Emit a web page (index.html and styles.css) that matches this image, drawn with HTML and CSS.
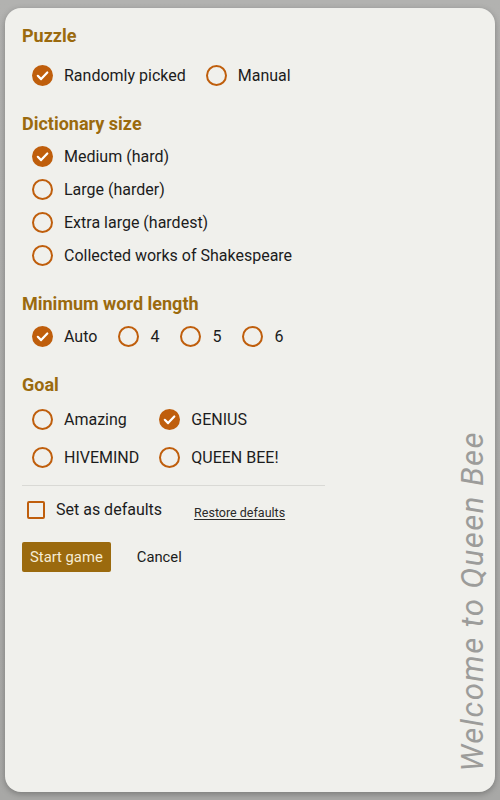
FILE: index.html
```html
<!DOCTYPE html>
<html lang="en">
<head>
<meta charset="utf-8">
<title>Queen Bee</title>
<link rel="stylesheet" href="styles.css">
</head>
<body>
<div class="card">
  <main class="content">
    <section class="group">
      <h2 class="group-title">Puzzle</h2>
      <div class="options options-inline options-first">
        <label class="option"><svg class="radio" viewBox="0 0 21 21"><circle cx="10.5" cy="10.5" r="10.5" class="fill"/><path d="M5.8 10.8l3.3 3.3 6.2-6.6" class="tick"/></svg><span class="label">Randomly picked</span></label>
        <label class="option"><svg class="radio" viewBox="0 0 21 21"><circle cx="10.5" cy="10.5" r="9.5" class="ring"/></svg><span class="label">Manual</span></label>
      </div>
    </section>

    <section class="group">
      <h2 class="group-title">Dictionary size</h2>
      <div class="options options-stack">
        <label class="option"><svg class="radio" viewBox="0 0 21 21"><circle cx="10.5" cy="10.5" r="10.5" class="fill"/><path d="M5.8 10.8l3.3 3.3 6.2-6.6" class="tick"/></svg><span class="label">Medium (hard)</span></label>
        <label class="option"><svg class="radio" viewBox="0 0 21 21"><circle cx="10.5" cy="10.5" r="9.5" class="ring"/></svg><span class="label">Large (harder)</span></label>
        <label class="option"><svg class="radio" viewBox="0 0 21 21"><circle cx="10.5" cy="10.5" r="9.5" class="ring"/></svg><span class="label">Extra large (hardest)</span></label>
        <label class="option"><svg class="radio" viewBox="0 0 21 21"><circle cx="10.5" cy="10.5" r="9.5" class="ring"/></svg><span class="label">Collected works of Shakespeare</span></label>
      </div>
    </section>

    <section class="group">
      <h2 class="group-title">Minimum word length</h2>
      <div class="options options-inline options-lengths">
        <label class="option"><svg class="radio" viewBox="0 0 21 21"><circle cx="10.5" cy="10.5" r="10.5" class="fill"/><path d="M5.8 10.8l3.3 3.3 6.2-6.6" class="tick"/></svg><span class="label">Auto</span></label>
        <label class="option"><svg class="radio" viewBox="0 0 21 21"><circle cx="10.5" cy="10.5" r="9.5" class="ring"/></svg><span class="label">4</span></label>
        <label class="option"><svg class="radio" viewBox="0 0 21 21"><circle cx="10.5" cy="10.5" r="9.5" class="ring"/></svg><span class="label">5</span></label>
        <label class="option"><svg class="radio" viewBox="0 0 21 21"><circle cx="10.5" cy="10.5" r="9.5" class="ring"/></svg><span class="label">6</span></label>
      </div>
    </section>

    <section class="group">
      <h2 class="group-title">Goal</h2>
      <div class="options options-grid">
        <label class="option"><svg class="radio" viewBox="0 0 21 21"><circle cx="10.5" cy="10.5" r="9.5" class="ring"/></svg><span class="label">Amazing</span></label>
        <label class="option"><svg class="radio" viewBox="0 0 21 21"><circle cx="10.5" cy="10.5" r="10.5" class="fill"/><path d="M5.8 10.8l3.3 3.3 6.2-6.6" class="tick"/></svg><span class="label">GENIUS</span></label>
        <label class="option"><svg class="radio" viewBox="0 0 21 21"><circle cx="10.5" cy="10.5" r="9.5" class="ring"/></svg><span class="label">HIVEMIND</span></label>
        <label class="option"><svg class="radio" viewBox="0 0 21 21"><circle cx="10.5" cy="10.5" r="9.5" class="ring"/></svg><span class="label">QUEEN BEE!</span></label>
      </div>
    </section>

    <hr class="divider">

    <div class="defaults-row">
      <label class="check-option"><span class="checkbox"></span><span class="label">Set as defaults</span></label>
      <a class="restore" href="#">Restore defaults</a>
    </div>

    <div class="actions">
      <button class="btn-primary" type="button">Start game</button>
      <button class="btn-text" type="button">Cancel</button>
    </div>
  </main>
  <aside class="welcome">Welcome to Queen Bee</aside>
</div>
</body>
</html>
```

FILE: styles.css
```css
* { box-sizing: border-box; }

html, body {
  margin: 0;
  height: 100%;
}

body {
  background: linear-gradient(#b2b2b0, #a8a8a6);
  padding: 8px 5px;
  font-family: Roboto, "Noto Sans", Arial, sans-serif;
  color: #1c1c1c;
}

.card {
  height: 784px;
  background: #f0f0ec;
  border-radius: 16px;
  box-shadow: 0 2px 6px rgba(0, 0, 0, 0.28);
  display: flex;
  padding: 18px 7px 0 17px;
}

.content {
  flex: 0 0 303px;
  display: flex;
  flex-direction: column;
}

.group + .group { margin-top: 22px; }

.group-title {
  margin: 0;
  font-size: 18px;
  line-height: 20px;
  font-weight: 700;
  color: #9b6a0e;
}

.options {
  padding-left: 10px;
  margin-top: 6px;
}

.options-first { margin-top: 13px; }

.options-inline {
  display: flex;
  column-gap: 20px;
}

.options-lengths { column-gap: 21px; }

.options-stack {
  display: flex;
  flex-direction: column;
}

.options-grid {
  display: grid;
  grid-template-columns: auto auto;
  justify-content: start;
  column-gap: 20px;
  row-gap: 5px;
  margin-top: 8px;
}

.option {
  display: flex;
  align-items: center;
  height: 33px;
  gap: 11px;
}

.radio {
  width: 21px;
  height: 21px;
  flex: none;
}

.radio .fill { fill: #bf5e0c; }
.radio .ring { fill: none; stroke: #bf5e0c; stroke-width: 2; }
.radio .tick { fill: none; stroke: #fff; stroke-width: 2.2; stroke-linecap: round; stroke-linejoin: round; }

.label {
  font-size: 16px;
  line-height: 20px;
  color: #1c1c1c;
}

.divider {
  border: 0;
  border-top: 1px solid #d9d9d5;
  margin: 11px 0 0;
  width: 100%;
}

.defaults-row {
  display: flex;
  align-items: center;
  height: 28px;
  margin-top: 10px;
  padding-left: 5px;
}

.check-option {
  display: flex;
  align-items: center;
  gap: 11px;
}

.checkbox {
  width: 18px;
  height: 18px;
  border: 2px solid #bf5e0c;
  border-radius: 2px;
}

.restore {
  margin-left: 32px;
  margin-top: 4px;
  font-size: 12.5px;
  color: #2a2a2a;
  text-decoration: underline;
  text-underline-offset: 2px;
}

.actions {
  display: flex;
  align-items: center;
  margin-top: 18px;
}

.btn-primary {
  height: 30px;
  padding: 0 8px;
  border: 0;
  border-radius: 2px;
  background: #9b6a0e;
  color: #f6ecd5;
  font-family: Roboto, Arial, sans-serif;
  font-size: 14.8px;
}

.btn-text {
  margin-left: 18px;
  padding: 0 8px;
  border: 0;
  background: none;
  color: #1c1c1c;
  font-family: Roboto, Arial, sans-serif;
  font-size: 14.8px;
}

.welcome {
  margin-left: auto;
  align-self: flex-end;
  margin-bottom: 20px;
  writing-mode: vertical-rl;
  transform: rotate(180deg);
  font-size: 31px;
  line-height: 31px;
  font-weight: 400;
  font-style: italic;
  letter-spacing: 1.5px;
  color: #9c9c9a;
  white-space: nowrap;
}
```
